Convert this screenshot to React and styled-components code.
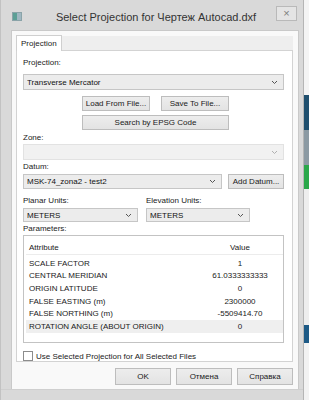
import React from 'react';
import styled, { createGlobalStyle } from 'styled-components';

const Global = createGlobalStyle`
  html, body { margin: 0; padding: 0; }
  body {
    background: #f2f2f2;
    font-family: "Liberation Sans", Arial, sans-serif;
    font-size: 8px;
    color: #222;
  }
`;

const Screen = styled.div`
  display: flex;
  width: 309px;
  height: 400px;
  overflow: hidden;
`;

const Window = styled.div`
  width: 304px;
  height: 400px;
  box-sizing: border-box;
  background: #d9d9d9;
  border-left: 1px solid #c2c2c2;
  border-right: 1px solid #b5b5b5;
  display: flex;
  flex-direction: column;
`;

const TitleBar = styled.div`
  height: 30px;
  display: flex;
  align-items: center;
  padding: 0 6px 0 11px;
`;

const AppIcon = styled.div`
  width: 8px;
  height: 7px;
  background: linear-gradient(90deg, #5c9f95 0 50%, #9fb7c1 50%);
  border: 1px solid #8aa3a8;
  margin-top: 2px;
`;

const Title = styled.div`
  flex: 1;
  text-align: center;
  padding-left: 14px;
  font-size: 11px;
  color: #333;
  margin-top: 3px;
`;

const CloseButton = styled.div`
  width: 19px;
  height: 13px;
  margin-top: -3px;
  border: 1px solid #b9b9b9;
  background: #e4e4e4;
  display: flex;
  align-items: center;
  justify-content: center;
  color: #7d7d7d;
  font-size: 11px;
  line-height: 1;
`;

const Client = styled.div`
  flex: 1;
  margin: 0 4px 0 10px;
  background: #f9f9f9;
  border: 1px solid #c9c9c9;
  border-bottom: none;
  padding: 3px 5px 0 4px;
  display: flex;
  flex-direction: column;
`;

const BottomFrame = styled.div`
  height: 10px;
  border-top: 1px solid #cfcfcf;
`;

const TabHeader = styled.div`
  display: flex;
  height: 16px;
  align-items: flex-end;
`;

const Tab = styled.div`
  height: 16px;
  box-sizing: border-box;
  padding: 0 4px;
  background: #fff;
  border: 1px solid #cfcfcf;
  border-bottom: none;
  display: flex;
  align-items: center;
  margin-bottom: -1px;
  position: relative;
  z-index: 1;
`;

const TabFill = styled.div`
  flex: 1;
  height: 14px;
  background: #eeeeee;
`;

const Panel = styled.div`
  background: #fff;
  border: 1px solid #d3d3d3;
  height: 312px;
  box-sizing: border-box;
  padding: 7px 8px 0 6px;
  display: flex;
  flex-direction: column;
`;

const Label = styled.div`
  width: ${p => (p.$w ? p.$w + 'px' : 'auto')};
  height: 10px;
  line-height: 10px;
  margin-top: ${p => p.$mt || 0}px;
  color: #222;
`;

const Row = styled.div`
  display: flex;
  align-items: ${p => p.$align || 'stretch'};
  gap: ${p => p.$gap || 0}px;
  margin-top: ${p => p.$mt || 0}px;
  padding-left: ${p => p.$pl || 0}px;
`;

const Combo = styled.div`
  width: ${p => (p.$w ? p.$w + 'px' : 'auto')};
  flex: ${p => (p.$w ? 'none' : 1)};
  height: ${p => p.$h || 14}px;
  box-sizing: border-box;
  margin-top: ${p => p.$mt || 0}px;
  border: 1px solid ${p => (p.$disabled ? '#e2e2e2' : '#c6c6c6')};
  background: ${p => (p.$disabled ? '#f1f1f1' : '#ececec')};
  display: flex;
  align-items: center;
  padding: 0 5px 0 3px;
  color: #111;
`;

const ComboText = styled.span`
  flex: 1;
  white-space: nowrap;
  overflow: hidden;
`;

const Button = styled.div`
  width: ${p => p.$w}px;
  height: ${p => p.$h || 15}px;
  box-sizing: border-box;
  border: 1px solid #bdbdbd;
  background: linear-gradient(#ededed, #e3e3e3);
  display: flex;
  align-items: center;
  justify-content: center;
  color: #1a1a1a;
  white-space: nowrap;
`;

const List = styled.div`
  height: 108px;
  margin-top: 1px;
  box-sizing: border-box;
  border: 1px solid #c3c3c3;
  background: #fff;
  padding: 4px 0 0 2px;
  display: flex;
  flex-direction: column;
`;

const ListHead = styled.div`
  display: grid;
  grid-template-columns: 171px 1fr;
  height: 14px;
  align-items: center;
  border-bottom: 1px solid #ececec;
  margin-bottom: 2px;
`;

const ListRow = styled.div`
  display: grid;
  grid-template-columns: 171px 1fr;
  height: 12.6px;
  align-items: center;
  background: ${p => (p.$sel ? '#efefef' : 'transparent')};
`;

const Cell = styled.div`
  padding-left: ${p => (p.$center ? 0 : 3)}px;
  text-align: ${p => (p.$center ? 'center' : 'left')};
  white-space: nowrap;
  color: #1a1a1a;
`;

const CheckBox = styled.div`
  width: 8px;
  height: 8px;
  border: 1px solid #8c8c8c;
  background: #fff;
`;

const Footer = styled.div`
  display: flex;
  justify-content: flex-end;
  gap: 5px;
  margin-top: 6px;
`;

const Desktop = styled.div`
  flex: 1;
  display: flex;
  flex-direction: column;
  background: #f4f4f4;
`;

const DesktopBit = styled.div`
  height: ${p => p.$h}px;
  background: ${p => p.$c};
`;

function Chevron({ color = '#555' }) {
  return (
    <svg width="7" height="5" viewBox="0 0 7 5">
      <path d="M1 1 L3.5 3.5 L6 1" fill="none" stroke={color} strokeWidth="1" />
    </svg>
  );
}

function Select({ children, ...rest }) {
  return (
    <Combo {...rest}>
      <ComboText>{children}</ComboText>
      <Chevron color={rest.$disabled ? '#b0b0b0' : '#555'} />
    </Combo>
  );
}

const params = [
  ['SCALE FACTOR', '1'],
  ['CENTRAL MERIDIAN', '61.0333333333'],
  ['ORIGIN LATITUDE', '0'],
  ['FALSE EASTING (m)', '2300000'],
  ['FALSE NORTHING (m)', '-5509414.70'],
  ['ROTATION ANGLE (ABOUT ORIGIN)', '0'],
];

const desktop = [
  [95, '#f4f4f4'],
  [35, '#1f4f6e'],
  [35, '#8c9aa3'],
  [24, '#2aa84a'],
  [136, '#eeeeee'],
  [18, '#1d5a86'],
  [57, '#f2f2f2'],
];

export default function App() {
  return (
    <Screen>
      <Global />
      <Window>
        <TitleBar>
          <AppIcon />
          <Title>Select Projection for Чертеж Autocad.dxf</Title>
          <CloseButton>×</CloseButton>
        </TitleBar>
        <Client>
          <TabHeader>
            <Tab>Projection</Tab>
            <TabFill />
          </TabHeader>
          <Panel>
            <Label>Projection:</Label>
            <Select $mt={6}>Transverse Mercator</Select>
            <Row $mt={6} $gap={11} $pl={59}>
              <Button $w={68}>Load From File...</Button>
              <Button $w={68}>Save To File...</Button>
            </Row>
            <Row $mt={4} $pl={59}>
              <Button $w={147}>Search by EPSG Code</Button>
            </Row>
            <Label $mt={3}>Zone:</Label>
            <Select $mt={1} $h={15} $disabled />
            <Label $mt={2}>Datum:</Label>
            <Row $mt={2} $gap={6}>
              <Select $h={15}>MSK-74_zona2 - test2</Select>
              <Button $w={56}>Add Datum...</Button>
            </Row>
            <Row $mt={7} $gap={8}>
              <Label $w={115}>Planar Units:</Label>
              <Label>Elevation Units:</Label>
            </Row>
            <Row $mt={2} $gap={8}>
              <Select $w={115}>METERS</Select>
              <Select $w={104}>METERS</Select>
            </Row>
            <Label $mt={2}>Parameters:</Label>
            <List>
              <ListHead>
                <Cell>Attribute</Cell>
                <Cell $center>Value</Cell>
              </ListHead>
              {params.map(([k, v], i) => (
                <ListRow key={k} $sel={i === params.length - 1}>
                  <Cell>{k}</Cell>
                  <Cell $center>{v}</Cell>
                </ListRow>
              ))}
            </List>
            <Row $mt={8} $gap={3} $align="center">
              <CheckBox />
              <span>Use Selected Projection for All Selected Files</span>
            </Row>
          </Panel>
          <Footer>
            <Button $w={56} $h={17}>OK</Button>
            <Button $w={56} $h={17}>Отмена</Button>
            <Button $w={56} $h={17}>Справка</Button>
          </Footer>
        </Client>
        <BottomFrame />
      </Window>
      <Desktop>
        {desktop.map(([h, c], i) => (
          <DesktopBit key={i} $h={h} $c={c} />
        ))}
      </Desktop>
    </Screen>
  );
}
